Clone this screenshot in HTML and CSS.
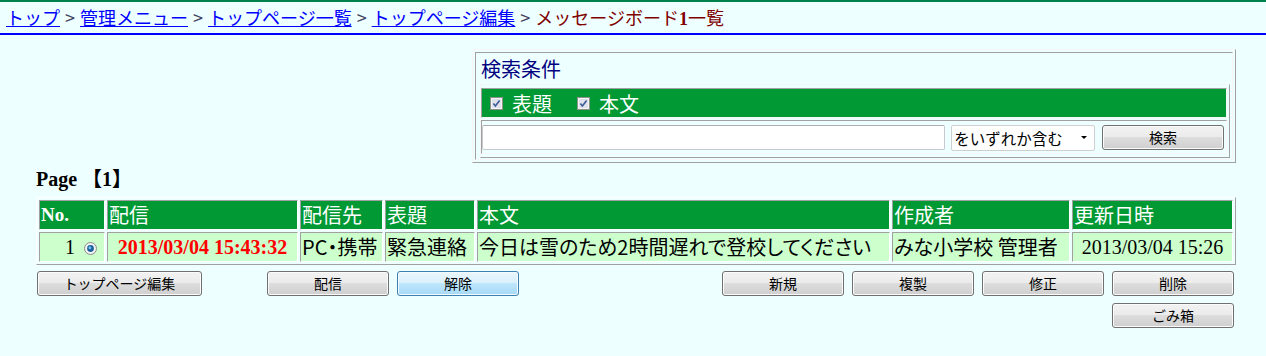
FILE: index.html
```html
<!DOCTYPE html>
<html lang="ja">
<head>
    <meta charset="UTF-8">
    <meta name="viewport" content="width=device-width, initial-scale=1.0">
    <title>メッセージボード1一覧</title>
    <link rel="stylesheet" href="styles.css">
</head>
<body>
    <div class="topbar">
        <div class="crumbs">
            <a href="#">トップ</a><span class="sep">&gt;</span><a href="#">管理メニュー</a><span class="sep">&gt;</span><a href="#">トップページ一覧</a><span class="sep">&gt;</span><a href="#">トップページ編集</a><span class="sep">&gt;</span><span class="current">メッセージボード<b>1</b>一覧</span>
        </div>
    </div>

    <div class="content">
        <form class="search" onsubmit="return false;">
            <div class="search-cell">
                <div class="search-title">検索条件</div>
                <div class="search-inner">
                    <div class="search-fields">
                        <label class="field">
                            <svg class="check" width="13" height="13" viewBox="0 0 13 13"><rect x="0.5" y="0.5" width="12" height="12" fill="#f4f4f4" stroke="#8e8f8f"/><rect x="2" y="2" width="9" height="9" fill="#dfe2ea"/><path d="M3.4 6.4 L5.4 8.9 L9.6 3.4" fill="none" stroke="#3d5a98" stroke-width="1.6"/></svg>
                            表題
                        </label>
                        <label class="field">
                            <svg class="check" width="13" height="13" viewBox="0 0 13 13"><rect x="0.5" y="0.5" width="12" height="12" fill="#f4f4f4" stroke="#8e8f8f"/><rect x="2" y="2" width="9" height="9" fill="#dfe2ea"/><path d="M3.4 6.4 L5.4 8.9 L9.6 3.4" fill="none" stroke="#3d5a98" stroke-width="1.6"/></svg>
                            本文
                        </label>
                    </div>
                    <div class="search-query">
                        <input class="keyword" type="text">
                        <span class="select-wrap">
                            <select class="match">
                                <option>をいずれか含む</option>
                                <option>をすべて含む</option>
                            </select>
                        </span>
                        <button class="btn btn-search" type="button">検索</button>
                    </div>
                </div>
            </div>
        </form>

        <div class="page-label">Page 【1】</div>

        <table class="list">
            <tr>
                <th class="col-no num-head">No.</th>
                <th class="col-send">配信</th>
                <th class="col-target">配信先</th>
                <th class="col-title">表題</th>
                <th class="col-body">本文</th>
                <th class="col-author">作成者</th>
                <th class="col-date">更新日時</th>
            </tr>
            <tr>
                <td class="num">1<svg class="radio" width="13" height="13" viewBox="0 0 13 13"><circle cx="6.5" cy="6.5" r="6" fill="#eeeeee" stroke="#8e8f8f"/><circle cx="6.5" cy="6.5" r="4.6" fill="#fafafa"/><circle cx="6.5" cy="6.5" r="3.4" fill="#1b5f9c"/><circle cx="5.9" cy="5.8" r="1.5" fill="#6fc0ec"/></svg></td>
                <td class="sent">2013/03/04 15:43:32</td>
                <td class="text">PC・携帯</td>
                <td class="text">緊急連絡</td>
                <td class="text">今日は雪のため2時間遅れで登校してください</td>
                <td class="text">みな小学校 管理者</td>
                <td class="date">2013/03/04 15:26</td>
            </tr>
        </table>

        <div class="actions">
            <button class="btn btn-wide" type="button">トップページ編集</button>
            <button class="btn btn-gap" type="button">配信</button>
            <button class="btn btn-active" type="button">解除</button>
            <div class="actions-right">
                <button class="btn" type="button">新規</button>
                <button class="btn" type="button">複製</button>
                <button class="btn" type="button">修正</button>
                <button class="btn" type="button">削除</button>
            </div>
        </div>
        <div class="actions-sub">
            <button class="btn" type="button">ごみ箱</button>
        </div>
    </div>
</body>
</html>
```

FILE: styles.css
```css
body {
    margin: 0;
    background-color: #eeffff;
    font-family: "Noto Sans CJK JP", sans-serif;
    color: #000;
}

/* breadcrumb */
.topbar {
    border-top: 2px solid #00804a;
    border-bottom: 2px solid #0000ff;
}

.crumbs {
    height: 31px;
    line-height: 31px;
    padding-left: 6px;
    font-size: 18px;
    white-space: nowrap;
}

.crumbs a {
    color: #0000ff;
    text-decoration: underline;
}

.crumbs .sep {
    color: #404060;
    padding: 0 5px;
}

.crumbs .current {
    color: #800000;
}

.crumbs .current b {
    font-family: "Liberation Serif", serif;
}

.content {
    width: 1200px;
    padding-left: 36px;
}

/* search box */
.search {
    width: 764px;
    box-sizing: border-box;
    margin: 14px 0 0 auto;
    padding: 2px;
    border: 1px solid;
    border-color: #f6f6f6 #a0a0a0 #a0a0a0 #f6f6f6;
}

.search-cell {
    border: 1px solid;
    border-color: #a0a0a0 #f6f6f6 #f6f6f6 #a0a0a0;
    padding: 0 2px 1px 4px;
}

.search-title {
    height: 31px;
    line-height: 31px;
    padding-left: 1px;
    font-size: 20px;
    color: #000080;
}

.search-inner {
    display: flex;
    flex-direction: column;
    gap: 2px;
    padding: 3px 2px 3px 0;
    border: 1px solid;
    border-color: #f6f6f6 #a0a0a0 #a0a0a0 #f6f6f6;
}

.search-fields,
.search-query {
    border: 1px solid;
    border-color: #a0a0a0 #f6f6f6 #f6f6f6 #a0a0a0;
}

.search-fields {
    display: flex;
    align-items: center;
    gap: 25px;
    height: 28px;
    padding-left: 8px;
    background-color: #009933;
    color: #fff;
    font-size: 20px;
}

.field {
    display: flex;
    align-items: center;
    gap: 9px;
}

.check {
    display: block;
}

.search-query {
    display: flex;
    align-items: center;
    height: 27px;
    padding: 3px 2px 2px 0;
}

.keyword {
    width: 464px;
    height: 25px;
    box-sizing: border-box;
    margin: 0 6px 0 0;
    border: 1px solid #c6c9ce;
    border-top-color: #abadb3;
    border-radius: 2px;
    background: #fff;
}

.select-wrap {
    position: relative;
    display: block;
}

.select-wrap::after {
    content: "";
    position: absolute;
    right: 8px;
    top: 11px;
    border-left: 3px solid transparent;
    border-right: 3px solid transparent;
    border-top: 3px solid #000;
}

.match {
    display: block;
    width: 144px;
    height: 26px;
    margin: 0;
    padding: 0 0 0 2px;
    appearance: none;
    border: 1px solid #cfcfcf;
    border-radius: 2px;
    background: #fff;
    font-family: "Noto Sans CJK JP", sans-serif;
    font-size: 15.5px;
    color: #000;
}

.btn-search {
    width: 123px;
    margin-left: 7px;
}

/* buttons */
.btn {
    width: 122px;
    height: 25px;
    padding: 0;
    border: 1px solid #707070;
    border-radius: 3px;
    box-shadow: inset 0 0 0 1px #fbfbfb;
    background: linear-gradient(#f2f2f2, #ebebeb 50%, #dddddd 50%, #cfcfcf);
    font-family: "Noto Sans CJK JP", sans-serif;
    font-size: 14px;
    line-height: 21px;
    color: #000;
    cursor: pointer;
}

.btn-wide {
    width: 165px;
}

.btn-gap {
    margin-left: 57px;
}

.btn-active {
    border-color: #3c7fb1;
    box-shadow: inset 0 0 0 1px #f4fbff;
    background: linear-gradient(#eaf6fd, #d9f0fc 50%, #bee6fd 50%, #a7d9f5);
}

.actions {
    display: flex;
    gap: 8px;
    margin-top: 6px;
    padding: 0 2px 0 1px;
}

.actions-right {
    display: flex;
    gap: 8px;
    margin-left: auto;
}

.actions-sub {
    display: flex;
    justify-content: flex-end;
    margin-top: 7px;
    padding-right: 2px;
}

/* list */
.page-label {
    height: 24px;
    margin: 4px 0 6px;
    font-family: "Liberation Serif", "Noto Sans CJK JP", serif;
    font-size: 20px;
    font-weight: bold;
    line-height: 24px;
}

.list {
    width: 1200px;
    box-sizing: border-box;
    table-layout: fixed;
    border-collapse: separate;
    border-spacing: 2px;
    border: 1px solid;
    border-color: #fff #a0a0a0 #a0a0a0 #fff;
}

.list th,
.list td {
    box-sizing: border-box;
    height: 30px;
    padding: 0 1px;
    border: 1px solid;
    border-color: #a0a0a0 #fff #fff #a0a0a0;
    font-size: 20px;
    line-height: 28px;
    white-space: nowrap;
    overflow: hidden;
}

.list th {
    background-color: #009933;
    color: #fff;
    font-weight: normal;
    text-align: left;
}

.list td {
    background-color: #ccffcc;
}

.col-no { width: 66px; }
.col-send { width: 191px; }
.col-target { width: 83px; }
.col-title { width: 90px; }
.col-body { width: 413px; }
.col-author { width: 178px; }
.col-date { width: 161px; }

.list .num-head {
    font-family: "Liberation Serif", serif;
    font-size: 19px;
    font-weight: bold;
}

.list .num {
    text-align: right;
    font-family: "Liberation Serif", serif;
}

.radio {
    margin: 0 6px 0 9px;
    vertical-align: -1px;
}

.list .sent {
    text-align: center;
    font-family: "Liberation Serif", serif;
    font-weight: bold;
    color: #ff0000;
}

.list .text {
    font-feature-settings: "palt";
}

.list .date {
    text-align: center;
    font-family: "Liberation Serif", serif;
}
```
